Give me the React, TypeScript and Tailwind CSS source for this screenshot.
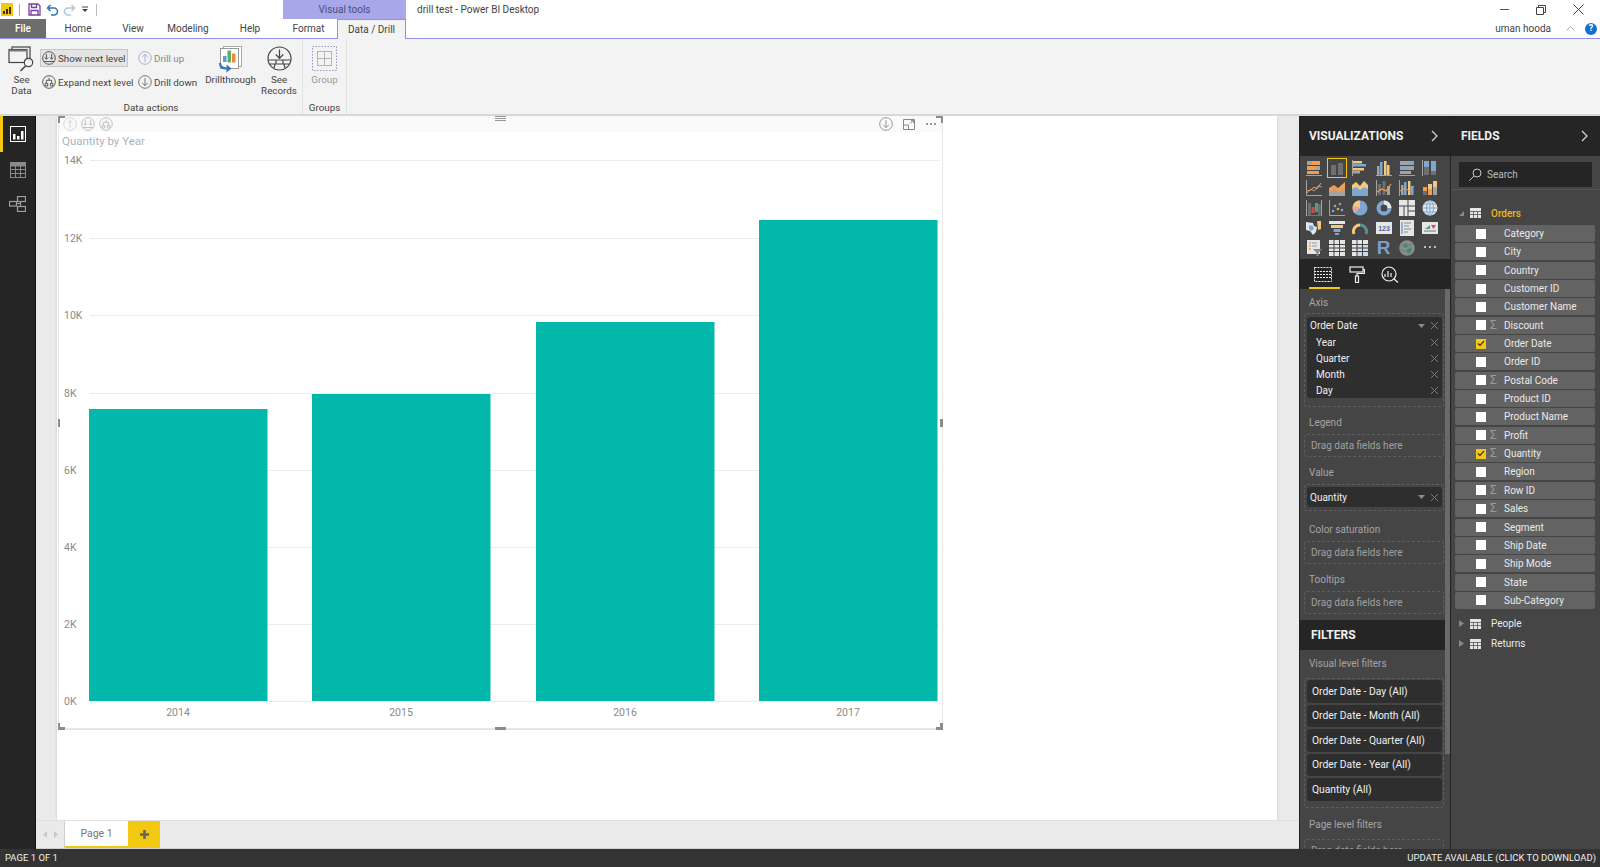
import type { ReactNode } from 'react';

const FONT = "font-['Roboto','Liberation_Sans',sans-serif]";

// Ribbon icon: round outline with something inside
const Round = ({ size = 14, color = '#444', children }: { size?: number; color?: string; children: ReactNode }) => (
  <svg width={size} height={size} viewBox="0 0 16 16" fill="none" stroke={color} strokeWidth="1" className="shrink-0">
    <circle cx="8" cy="8" r="7.2" />
    {children}
  </svg>
);

const ArrowUp = () => <path d="M8 12.5V4M4.8 7L8 3.8 11.2 7" />;
const ArrowDown = () => <path d="M8 3.5V12M4.8 9L8 12.2 11.2 9" />;
const NextLevel = () => <path d="M5 3.5V9M3.2 7.5L5 9.5 6.8 7.5M11 3.5V9M9.2 7.5L11 9.5 12.8 7.5M2 12h12" />;
const Expand = () => <path d="M8 3v3M5 6h6v3M5 6v3M3.5 9.5h3v3h-3zM9.5 9.5h3v3h-3z" />;

const SeeDataIcon = () => (
  <svg width="27" height="26" viewBox="0 0 27 26" fill="none" stroke="#444" strokeWidth="1.2">
    <rect x="4" y="1" width="18" height="12" fill="#f3f3f3" />
    <rect x="1" y="3.5" width="18" height="13" fill="#f3f3f3" />
    <rect x="1" y="3.5" width="18" height="2" fill="#777" stroke="none" />
    <circle cx="20.5" cy="16.5" r="4.2" fill="#f3f3f3" />
    <path d="M17.5 20L12.5 25" strokeWidth="1.6" />
  </svg>
);

const DrillthroughIcon = () => (
  <svg width="25" height="28" viewBox="0 0 25 28">
    <rect x="5.5" y="1.5" width="18" height="20" fill="#fff" stroke="#aaa" />
    <rect x="2.5" y="3.5" width="18" height="20" fill="#fff" stroke="#999" />
    <rect x="5" y="11" width="3.5" height="6" fill="#5a9bd5" />
    <rect x="9.5" y="5.5" width="3.5" height="12" fill="#5bae6a" />
    <rect x="14" y="8.5" width="3.5" height="9" fill="#ed8b3b" />
    <path d="M2 18c0 4 3 5.5 7 5.5" fill="none" stroke="#2e75b6" strokeWidth="2.2" />
    <path d="M8.5 19.5l5 4-5 4z" fill="#2e75b6" />
  </svg>
);

const SeeRecordsIcon = () => (
  <svg width="25" height="25" viewBox="0 0 25 25" fill="none" stroke="#444" strokeWidth="1.2">
    <circle cx="12.5" cy="12.5" r="11.5" />
    <path d="M12.5 3.5V12M8.8 8.5l3.7 3.8 3.7-3.8" />
    <path d="M1.5 14h22M2.5 18h20M9 14v4M16 14v4M8 18l-1 4M17 18l1 4" />
  </svg>
);

const GroupIcon = () => (
  <svg width="25" height="25" viewBox="0 0 25 25" fill="none">
    <rect x="0.5" y="0.5" width="24" height="24" stroke="#9a9ac0" strokeDasharray="1.5 1.5" />
    <rect x="5.5" y="5.5" width="14" height="14" stroke="#b5b5b5" />
    <path d="M12.5 5.5v14M5.5 12.5h14" stroke="#b5b5b5" />
  </svg>
);

const G = '#a3a3a3';
const D = '#6f6f6f';
const O = '#ee9f52';
const Y = '#f4c77f';
const B = '#7ea6d3';
const L = '#e6e6e6';

// 16x16 pictograms for the visualizations gallery
const vizIcons: ReactNode[] = [
  <><path d="M0 15.5h16" stroke={G} /><rect x="1" y="1" width="5" height="4" fill={G} /><rect x="6" y="1" width="8" height="4" fill={O} /><rect x="1" y="6" width="9" height="4" fill={O} /><rect x="10" y="6" width="4" height="4" fill={G} /><rect x="1" y="11" width="12" height="3" fill={O} /></>,
  <><rect x="2" y="5" width="5" height="10" fill={D} /><rect x="9" y="3" width="5" height="12" fill={D} /></>,
  <><path d="M.5 0v16" stroke={G} /><rect x="1" y="1" width="9" height="2.5" fill={Y} /><rect x="1" y="4" width="13" height="2.5" fill={B} /><rect x="1" y="8" width="11" height="2.5" fill={Y} /><rect x="1" y="11" width="7" height="2.5" fill={G} /></>,
  <><path d="M0 15.5h16" stroke={G} /><rect x="1" y="6" width="2.5" height="9" fill={G} /><rect x="4" y="2" width="2.5" height="13" fill={B} /><rect x="8" y="1" width="2.5" height="14" fill={Y} /><rect x="11" y="5" width="2.5" height="10" fill={Y} /></>,
  <><path d="M0 15.5h16" stroke={G} /><rect x="1" y="1" width="9" height="4" fill={G} /><rect x="10" y="1" width="5" height="4" fill={B} /><rect x="1" y="6" width="5" height="4" fill={B} /><rect x="6" y="6" width="9" height="4" fill={G} /><rect x="1" y="11" width="11" height="3" fill={G} /></>,
  <><path d="M.5 0v16" stroke={G} /><rect x="2" y="1" width="5" height="6" fill={B} /><rect x="2" y="7" width="5" height="8" fill={D} /><rect x="9" y="1" width="5" height="10" fill={B} /><rect x="9" y="11" width="5" height="4" fill={D} /></>,
  <><path d="M.5 0v15.5H16" stroke={G} fill="none" /><path d="M1 13l4-4 3 2 4-5 4 1" stroke={B} fill="none" /><path d="M1 11l4-1 3-3 3 2 4-6" stroke={O} fill="none" /></>,
  <><path d="M0 8l5-3 4 3 7-6v14H0z" fill={O} /><path d="M0 12l6-2 4 2 6-3v7H0z" fill={G} /></>,
  <><path d="M0 5l4-3 4 4 4-5 4 4v11H0z" fill={Y} /><path d="M0 9l4-2 4 3 4-3 4 2v7H0z" fill={B} /></>,
  <><path d="M.5 0v16" stroke={G} /><rect x="2" y="4" width="3" height="11" fill={D} /><rect x="6.5" y="1" width="3" height="14" fill={D} /><rect x="11" y="6" width="3" height="9" fill={G} /><path d="M1 12l5-3 4 2 5-7" stroke={O} fill="none" strokeWidth="1.2" /></>,
  <><path d="M.5 0v16" stroke={G} /><rect x="2" y="5" width="2.5" height="10" fill={G} /><rect x="5" y="2" width="2.5" height="13" fill={B} /><rect x="9" y="1" width="2.5" height="14" fill={Y} /><rect x="12" y="6" width="2.5" height="9" fill={B} /><path d="M1 11l5-3 4 3 5-5" stroke={O} fill="none" /></>,
  <><rect x="1" y="7" width="4" height="4" fill={O} /><rect x="1" y="11" width="4" height="4" fill={D} /><rect x="6" y="4" width="4" height="5" fill={Y} /><rect x="6" y="9" width="4" height="6" fill={O} /><rect x="11" y="1" width="4" height="6" fill={Y} /><rect x="11" y="7" width="4" height="8" fill={G} /></>,
  <><path d="M.5 0v16h15V0" stroke={G} fill="none" /><rect x="2" y="3" width="3" height="12" fill={D} /><rect x="5.5" y="7" width="3" height="6" fill="#c94f4f" /><rect x="9" y="3" width="3" height="9" fill="#4aa17f" /><rect x="12.2" y="4" width="2.5" height="11" fill={D} /></>,
  <><path d="M.5 0v15.5H16" stroke={G} fill="none" /><circle cx="4" cy="11" r="1.3" fill={B} /><circle cx="6" cy="6" r="1.3" fill={G} /><circle cx="9" cy="9" r="1.3" fill={O} /><circle cx="11" cy="4" r="1.3" fill={B} /><circle cx="13" cy="10" r="1.3" fill={B} /></>,
  <><circle cx="8" cy="8" r="7.5" fill={B} /><path d="M8 8V.5A7.5 7.5 0 0 0 .7 6.3z" fill={Y} /><path d="M8 8L.7 6.3A7.5 7.5 0 0 0 3 13.6z" fill="#e0a49a" /></>,
  <><circle cx="8" cy="8" r="5.5" fill="none" stroke={B} strokeWidth="4" /><path d="M8 2.5a5.5 5.5 0 0 1 5.5 5.5" fill="none" stroke={L} strokeWidth="4" /></>,
  <><rect x="0" y="0" width="16" height="16" fill={L} /><path d="M0 6h16M9 0v16M5 6v10M9 11h7" stroke="#454545" /></>,
  <><circle cx="8" cy="8" r="7.5" fill={L} /><path d="M8 .5v15M.5 8h15M2 4h12M2 12h12" stroke={B} /><ellipse cx="8" cy="8" rx="3.5" ry="7.5" fill="none" stroke={B} /></>,
  <><path d="M0 2l7 1 1 3 3 1-1 5-3 3-3-4-4-1z" fill={L} /><path d="M3 5l4 1 1 3-3 2-2-2z" fill={B} /><path d="M11 1h4v8l-3 1z" fill={Y} /></>,
  <><rect x="0" y="1" width="16" height="3" fill={L} /><rect x="2" y="5" width="12" height="3" fill={Y} /><rect x="4.5" y="9" width="7" height="3" fill={B} /><rect x="6" y="13" width="4" height="2" fill={B} /></>,
  <><path d="M2 14A6.5 6.5 0 0 1 8 5" fill="none" stroke={Y} strokeWidth="3" /><path d="M8 5a6.5 6.5 0 0 1 6 9" fill="none" stroke="#5e8f8f" strokeWidth="3" /></>,
  <><rect x="0" y="2" width="16" height="12" fill={L} /><text x="8" y="11" fontSize="7" textAnchor="middle" fill="#4a6f9c" fontWeight="700" fontFamily="Liberation Sans, sans-serif">123</text></>,
  <><rect x="1" y="0" width="14" height="16" fill={L} /><path d="M3 2v12" stroke={B} strokeWidth="1.6" /><path d="M5 3h7M5 6h5M5 9h7M5 12h4" stroke="#888" /></>,
  <><rect x="0" y="2" width="16" height="12" fill={L} /><path d="M3 9h5V5z" fill="#4aa17f" /><path d="M9 5h5l-2.5 4z" fill="#c94f4f" /><path d="M2 11h12" stroke="#777" /></>,
  <><rect x="1" y="0" width="13" height="14" fill={L} /><path d="M3 3h2M3 6h2M3 9h2" stroke={O} strokeWidth="1.4" /><path d="M6 3h5M6 6h5" stroke="#999" /><path d="M7 9h9l-3.5 3.5V16h-2v-3.5z" fill="#8a8a8a" /></>,
  <><rect x="0" y="0" width="16" height="16" fill={L} /><path d="M0 4.5h16M0 8h16M0 11.500h16M5 0v16M10.500 0v16" stroke="#454545" /></>,
  <><rect x="0" y="0" width="16" height="16" fill="#cdd8e6" /><rect x="0" y="0" width="16" height="4" fill={L} /><rect x="0" y="0" width="5" height="16" fill={L} /><path d="M0 4.5h16M0 8h16M0 11.500h16M5 0v16M10.500 0v16" stroke="#454545" /></>,
  null, // the R visual is a plain letter, see the gallery
  <><circle cx="8" cy="8" r="7.8" fill="#8c8c8c" /><path d="M3 5l4-2 3 3-4 2zM7 10l5-3 1 4-4 3z" fill="#3f8f6a" /><path d="M2 9l3 1 1 3zM10 3l3 2-2 1z" fill="#3f7fbf" /></>,
  <><circle cx="3" cy="7" r="1" fill={L} /><circle cx="8" cy="7" r="1" fill={L} /><circle cx="13" cy="7" r="1" fill={L} /></>,
];

const fields: [string, boolean, boolean][] = [
  ['Category', false, false],
  ['City', false, false],
  ['Country', false, false],
  ['Customer ID', false, false],
  ['Customer Name', false, false],
  ['Discount', false, true],
  ['Order Date', true, false],
  ['Order ID', false, false],
  ['Postal Code', false, true],
  ['Product ID', false, false],
  ['Product Name', false, false],
  ['Profit', false, true],
  ['Quantity', true, true],
  ['Region', false, false],
  ['Row ID', false, true],
  ['Sales', false, true],
  ['Segment', false, false],
  ['Ship Date', false, false],
  ['Ship Mode', false, false],
  ['State', false, false],
  ['Sub-Category', false, false],
];

const visualFilters = [
  'Order Date - Day (All)',
  'Order Date - Month (All)',
  'Order Date - Quarter (All)',
  'Order Date - Year (All)',
  'Quantity (All)',
];

const TableGlyph = () => (
  <svg width="11" height="10" viewBox="0 0 11 10">
    <rect width="11" height="10" fill="#e4e4e4" />
    <path d="M0 3.500h11M0 6.500h11M3.500 3v7M7.500 3v7" stroke="#555" strokeWidth="0.8" />
  </svg>
);

const Chevron = () => (
  <svg width="8" height="12" viewBox="0 0 8 12" fill="none" stroke="#d8d8d8" strokeWidth="1.2">
    <path d="M1 1l5 5-5 5" />
  </svg>
);

const Cross = () => (
  <svg width="7" height="7" viewBox="0 0 7 7" stroke="#7d7d7d" strokeWidth="1">
    <path d="M0 0l7 7M7 0L0 7" />
  </svg>
);

const Caret = () => (
  <svg width="7" height="4" viewBox="0 0 7 4" fill="#8a8a8a">
    <path d="M0 0h7L3.500 4z" />
  </svg>
);

const WellLabel = ({ children, className = '' }: { children: ReactNode; className?: string }) => (
  <div className={`h-[15px] pl-[9px] text-[10px] leading-[15px] text-[#a5a5a5] ${className}`}>{children}</div>
);

const EmptyWell = () => (
  <div className="ml-[4px] h-[23px] w-[140px] rounded-[3px] border border-dashed border-[#5e5e5e] pl-[6px] text-[10px] leading-[22px] text-[#a0a0a0]">
    Drag data fields here
  </div>
);

const Handle = ({ className }: { className: string }) => <div className={`absolute bg-[#8c8c8c] ${className}`} />;

const Chart = () => {
  const ticks = [
    ['14K', 160],
    ['12K', 238],
    ['10K', 315],
    ['8K', 393],
    ['6K', 470],
    ['4K', 547],
    ['2K', 624],
    ['0K', 701],
  ] as const;
  const bars = [
    ['2014', 89, 409],
    ['2015', 312, 394],
    ['2016', 536, 322],
    ['2017', 759, 220],
  ] as const;
  // page coordinates minus the visual's own origin (58, 116)
  return (
    <svg width="884" height="612" className="absolute left-0 top-0" fontFamily="Roboto, sans-serif" fontSize="10.500">
      {ticks.map(([label, y]) => (
        <g key={label}>
          <line x1="31" x2="880" y1={y - 116 + 0.5} y2={y - 116 + 0.5} stroke="#ebebeb" />
          <text x="5" y={y - 116 + 4} fill="#8a8a8a">{label}</text>
        </g>
      ))}
      {bars.map(([label, x, top]) => (
        <g key={label}>
          <rect x={x - 59} y={top - 116} width="178.500" height={701 - top} fill="#01b8aa" />
          <text x={x - 58 + 88} y="600" textAnchor="middle" fill="#8a8a8a">{label}</text>
        </g>
      ))}
    </svg>
  );
};

export default function App() {
  return (
    <div className={`flex h-[867px] w-[1600px] flex-col overflow-hidden bg-white ${FONT}`}>
      {/* title bar */}
      <div className="flex h-[19px] shrink-0 items-center bg-white">
        <div className="ml-[1px] flex h-[13px] w-[12px] items-end justify-center gap-[1px] bg-[#f2c811] pb-[2px]">
          <span className="h-[3px] w-[2px] bg-[#333]" />
          <span className="h-[5px] w-[2px] bg-[#333]" />
          <span className="h-[7px] w-[2px] bg-[#333]" />
        </div>
        <div className="ml-[6px] h-[12px] w-px bg-[#aaa]" />
        <svg width="13" height="13" viewBox="0 0 13 13" className="ml-[8px]" fill="none" stroke="#7a3f9d" strokeWidth="1.3">
          <path d="M1 1h9l2 2v9H1z" />
          <path d="M3.500 1v3.500h5V1M3 12V7.500h7V12" />
        </svg>
        <svg width="13" height="12" viewBox="0 0 13 12" className="ml-[5px]" fill="none" stroke="#2e75b6" strokeWidth="1.500">
          <path d="M4.500 1L1.500 4l3 3M2 4h6a3.500 3.500 0 0 1 0 7H5" />
        </svg>
        <svg width="13" height="12" viewBox="0 0 13 12" className="ml-[4px]" fill="none" stroke="#b4c6dc" strokeWidth="1.500">
          <path d="M8.500 1l3 3-3 3M11 4H5a3.500 3.500 0 0 0 0 7h3" />
        </svg>
        <svg width="7" height="7" viewBox="0 0 7 7" className="ml-[6px]">
          <path d="M0 1h6" stroke="#444" />
          <path d="M0 3h6L3 6z" fill="#444" />
        </svg>
        <div className="ml-[7px] h-[12px] w-px bg-[#bbb]" />
        <div className="ml-[186px] flex h-[19px] w-[123px] items-center justify-center bg-[#a7a7e9] text-[10px] text-[#4d4d78]">
          Visual tools
        </div>
        <div className="ml-[11px] text-[10px] text-[#444]">drill test - Power BI Desktop</div>
        <div className="ml-auto flex items-center">
          <div className="h-px w-[9px] bg-[#555]" />
          <svg width="10" height="10" viewBox="0 0 10 10" className="ml-[27px]" fill="none" stroke="#444">
            <path d="M.5 2.500h7v7h-7zM2.500 2.500v-2h7v7h-2" />
          </svg>
          <svg width="11" height="11" viewBox="0 0 11 11" className="ml-[27px] mr-[16px]" stroke="#444">
            <path d="M.5.500l10 10M10.500.500l-10 10" />
          </svg>
        </div>
      </div>

      {/* ribbon tabs */}
      <div className="flex h-[20px] shrink-0 border-b border-[#8f8fe8] text-[10px] text-[#444]">
        <div className="flex h-[19px] w-[46px] items-center justify-center bg-[#6d6d6d] font-medium text-white">File</div>
        <div className="flex w-[64px] justify-center pt-[1px] leading-[18px]">Home</div>
        <div className="flex w-[46px] justify-center pt-[1px] leading-[18px]">View</div>
        <div className="flex w-[64px] justify-center pt-[1px] leading-[18px]">Modeling</div>
        <div className="flex w-[60px] justify-center pt-[1px] leading-[18px]">Help</div>
        <div className="flex w-[57px] justify-center pt-[1px] leading-[18px]">Format</div>
        <div className="z-10 flex h-[20px] w-[69px] justify-center border-x border-t border-[#8f8fe8] bg-[#f3f3f3] pt-[1px] leading-[18px]">
          Data / Drill
        </div>
        <div className="ml-auto flex items-center text-[10px] text-[#444]">
          <span>uman hooda</span>
          <svg width="9" height="5" viewBox="0 0 9 5" className="ml-[15px]" fill="none" stroke="#aaa">
            <path d="M.5 4.500l4-4 4 4" />
          </svg>
          <div className="ml-[10px] mr-[3px] flex h-[12px] w-[12px] items-center justify-center rounded-full bg-[#1170cf] text-[9px] font-bold text-white">?</div>
        </div>
      </div>

      {/* ribbon */}
      <div className="flex h-[77px] shrink-0 border-b-2 border-[#d8d8d8] bg-[#f3f3f3] text-[9.8px] leading-[11px] text-[#444]">
        <div className="flex w-[303px] flex-col border-r border-[#e2e2e2]">
          <div className="flex h-[63px] pt-[7px]">
            <div className="flex w-[40px] flex-col items-center pl-[3px]">
              <SeeDataIcon />
              <span className="mt-[2px] text-center">See<br />Data</span>
            </div>
            <div className="flex w-[97px] flex-col">
              <div className="mt-[3px] flex h-[18px] w-[88px] items-center gap-[2px] border border-[#c6c6c6] bg-[#e4e4e4] pl-[1px]">
                <Round><NextLevel /></Round>
                <span className="whitespace-nowrap">Show next level</span>
              </div>
              <div className="mt-[6px] flex h-[18px] items-center gap-[2px] pl-[2px]">
                <Round><Expand /></Round>
                <span className="whitespace-nowrap">Expand next level</span>
              </div>
            </div>
            <div className="flex w-[64px] flex-col">
              <div className="mt-[3px] flex h-[18px] items-center gap-[2px] pl-[1px] text-[#888]">
                <Round color="#99aac4"><ArrowUp /></Round>
                <span>Drill up</span>
              </div>
              <div className="mt-[6px] flex h-[18px] items-center gap-[2px] pl-[1px]">
                <Round color="#666"><ArrowDown /></Round>
                <span className="whitespace-nowrap">Drill down</span>
              </div>
            </div>
            <div className="-mt-[1px] flex w-[59px] flex-col items-center">
              <DrillthroughIcon />
              <span className="mt-[1px]">Drillthrough</span>
            </div>
            <div className="flex w-[38px] flex-col items-center">
              <SeeRecordsIcon />
              <span className="mt-[3px] text-center">See<br />Records</span>
            </div>
          </div>
          <div className="text-center leading-[12px]">Data actions</div>
        </div>
        <div className="flex w-[44px] flex-col items-center border-r border-[#e2e2e2]">
          <div className="flex h-[63px] flex-col items-center pt-[7px]">
            <GroupIcon />
            <span className="mt-[3px] text-[#999]">Group</span>
          </div>
          <div className="leading-[12px]">Groups</div>
        </div>
      </div>

      {/* main */}
      <div className="flex min-h-0 flex-1 overflow-hidden">
        {/* left rail */}
        <div className="flex w-[35px] shrink-0 flex-col bg-[#252525]">
          <div className="flex h-[36px] items-center justify-center border-l-[3px] border-[#f2c811] pr-[3px]">
            <svg width="16" height="16" viewBox="0 0 16 16">
              <rect x="0.500" y="0.500" width="15" height="15" fill="none" stroke="#fff" />
              <rect x="3" y="8" width="2.500" height="5.500" fill="#fff" />
              <rect x="7" y="10" width="2.500" height="3.500" fill="#fff" />
              <rect x="11" y="5" width="2.500" height="8.500" fill="#fff" />
            </svg>
          </div>
          <div className="flex h-[36px] items-center justify-center">
            <svg width="16" height="16" viewBox="0 0 16 16" fill="none" stroke="#8a8a8a">
              <rect x="0.500" y="0.500" width="15" height="15" />
              <rect x="0.500" y="0.500" width="15" height="3.500" fill="#8a8a8a" />
              <path d="M0 7.500h16M0 11.500h16M5.500 4v12M10.500 4v12" />
            </svg>
          </div>
          <div className="flex h-[32px] items-center justify-center">
            <svg width="17" height="16" viewBox="0 0 17 16" fill="none" stroke="#a0a0a0" strokeWidth="1.200">
              <rect x="0.500" y="5.500" width="7" height="4.500" />
              <rect x="8.500" y="0.500" width="8" height="5" />
              <rect x="8.500" y="10.500" width="8" height="5" />
              <path d="M7.500 7.500h4M11.500 5.500v5" />
            </svg>
          </div>
        </div>

        {/* canvas and page tabs */}
        <div className="flex min-w-0 flex-1 flex-col border-l border-[#111]">
          <div className="flex min-h-0 flex-1 bg-[#eaeaea]">
            <div className="ml-[21px] w-[1220px] bg-white shadow-[0_0_3px_rgba(0,0,0,0.15)]">
              <div className="relative ml-[1px] h-[614px] w-[885px] border-x-[1px] border-b-[2px] border-[#e6e6e6]">
                <div className="flex h-[16px] items-center bg-[#fafafa] pl-[4px]">
                  <div className="flex gap-[4px] opacity-60">
                    <Round size={14} color="#b9b9b9"><ArrowUp /></Round>
                    <Round size={14} color="#8f8f8f"><NextLevel /></Round>
                    <Round size={14} color="#8f8f8f"><Expand /></Round>
                  </div>
                  <div className="ml-auto mr-[6px] flex items-center gap-[10px]">
                    <Round size={14} color="#888"><ArrowDown /></Round>
                    <svg width="12" height="11" viewBox="0 0 12 11" fill="none" stroke="#888">
                      <path d="M.5.500h11v10H.5zM.5 6h5v4.500M7 4.500l3-3M8 1.500h2.500V4" />
                    </svg>
                    <span className="ml-[1px] flex gap-[2px]">
                      <i className="h-[2px] w-[2px] rounded-full bg-[#777]" />
                      <i className="h-[2px] w-[2px] rounded-full bg-[#777]" />
                      <i className="h-[2px] w-[2px] rounded-full bg-[#777]" />
                    </span>
                  </div>
                </div>
                <Chart />
                <div className="relative pl-[3px] text-[11.5px] leading-[18px] text-[#aeb3bb]">Quantity by Year</div>
                {/* selection handles */}
                <Handle className="-left-[1px] top-0 h-[2px] w-[7px]" />
                <Handle className="-left-[1px] top-0 h-[7px] w-[2px]" />
                <Handle className="-right-[1px] top-0 h-[2px] w-[7px]" />
                <Handle className="-right-[1px] top-0 h-[7px] w-[2px]" />
                <Handle className="-left-[1px] -bottom-[2px] h-[3px] w-[7px]" />
                <Handle className="-left-[1px] -bottom-[2px] h-[7px] w-[2px]" />
                <Handle className="-right-[1px] -bottom-[2px] h-[3px] w-[7px]" />
                <Handle className="-right-[1px] -bottom-[2px] h-[7px] w-[3px]" />
                <Handle className="-left-[1px] top-[303px] h-[8px] w-[2px]" />
                <Handle className="-right-[1px] top-[303px] h-[8px] w-[3px]" />
                <Handle className="-bottom-[2px] left-[436px] h-[3px] w-[11px]" />
                <div className="absolute left-[436px] top-0 flex w-[11px] flex-col gap-px">
                  <i className="h-px bg-[#999]" />
                  <i className="h-px bg-[#999]" />
                  <i className="h-px bg-[#999]" />
                </div>
              </div>
            </div>
          </div>
          <div className="flex h-[29px] shrink-0 border-t border-[#e0e0e0] border-b border-b-[#cfcfcf] bg-[#eaeaea]">
            <div className="flex w-[29px] items-center justify-center gap-[7px] border-r border-[#cfcfcf]">
              <svg width="4" height="7" viewBox="0 0 4 7" fill="#c6c6c6"><path d="M4 0v7L0 3.500z" /></svg>
              <svg width="4" height="7" viewBox="0 0 4 7" fill="#c6c6c6"><path d="M0 0v7l4-3.500z" /></svg>
            </div>
            <div className="flex w-[63px] items-center justify-center border-b-[2px] border-[#f2c811] bg-white text-[10.5px] text-[#777]">Page 1</div>
            <div className="flex w-[32px] items-center justify-center bg-[#f2c811]">
              <svg width="9" height="9" viewBox="0 0 9 9" fill="#666"><path d="M3.200 0h2.600v3.200H9v2.600H5.800V9H3.200V5.800H0V3.200h3.200z" /></svg>
            </div>
          </div>
        </div>

        {/* visualizations pane */}
        <div className="flex w-[151px] shrink-0 flex-col overflow-hidden border-l border-[#222] bg-[#454545]">
          <div className="flex h-[40px] shrink-0 items-center justify-between bg-[#252525] pl-[9px] pr-[11px]">
            <span className="text-[12px] font-bold text-[#f0f0f0]">VISUALIZATIONS</span>
            <Chevron />
          </div>
          <div className="grid h-[103px] shrink-0 grid-cols-[repeat(6,23.3px)] grid-rows-[repeat(5,20px)] content-start justify-start pl-[2px] pt-[2px]">
            {vizIcons.map((icon, i) => (
              <div key={i} className="flex items-center justify-center">
                {icon === null ? (
                  <span className="font-['Liberation_Sans',sans-serif] text-[19px] font-bold leading-[20px] text-[#7a9fc7]">R</span>
                ) : (
                  <svg width="16" height="16" viewBox="0 0 16 16" className={i === 1 ? 'box-content border border-[#f2c811] p-[1px]' : ''}>
                    {icon}
                  </svg>
                )}
              </div>
            ))}
          </div>
          <div className="flex h-[30px] shrink-0 items-center gap-[16.500px] bg-[#252525] pl-[14px]">
            <div className="relative flex h-full items-center">
              <svg width="18" height="15" viewBox="0 0 18 15" fill="none" stroke="#eee" strokeDasharray="2 1">
                <rect x="0.500" y="0.500" width="17" height="14" />
                <path d="M0 4.500h18M0 7.500h18M0 10.500h18" />
              </svg>
              <div className="absolute -left-[5px] bottom-0 h-[2px] w-[31px] bg-[#f2c811]" />
            </div>
            <svg width="16" height="17" viewBox="0 0 16 17" fill="none" stroke="#eee" strokeWidth="1.200">
              <rect x="1" y="1" width="13" height="5" />
              <path d="M14 3.500h1.500v4H8V10" />
              <rect x="6.500" y="10" width="3" height="6.500" />
            </svg>
            <svg width="18" height="17" viewBox="0 0 18 17" fill="none" stroke="#eee" strokeWidth="1.200">
              <circle cx="8" cy="8" r="7" />
              <path d="M4 11V8M7 11V5M10 11V7M12.500 12.500L17 16.500" />
            </svg>
          </div>

          <div className="flex min-h-0 flex-1">
            <div className="w-[145px] shrink-0">
              <WellLabel className="mt-[6px]">Axis</WellLabel>
              <div className="ml-[4px] mt-[3px] h-[94px] w-[140px] rounded-[3px] border border-dashed border-[#5e5e5e] pl-[2px] pt-[3px]">
                <div className="h-[81px] w-[135px] rounded-[3px] bg-[#2e2e2e] pl-[3px] text-[10px] text-[#f0f0f0]">
                  <div className="flex h-[17px] items-center pr-[4px]">
                    <span>Order Date</span>
                    <span className="ml-auto mr-[6px]"><Caret /></span>
                    <Cross />
                  </div>
                  {['Year', 'Quarter', 'Month', 'Day'].map((level) => (
                    <div key={level} className="flex h-[16px] items-center pl-[6px] pr-[4px]">
                      <span>{level}</span>
                      <span className="ml-auto"><Cross /></span>
                    </div>
                  ))}
                </div>
              </div>
              <WellLabel className="mt-[8px]">Legend</WellLabel>
              <div className="mt-[4px]"><EmptyWell /></div>
              <WellLabel className="mt-[8px]">Value</WellLabel>
              <div className="ml-[4px] mt-[4px] h-[27px] w-[140px] rounded-[3px] border border-dashed border-[#5e5e5e] pl-[2px] pt-[2px]">
                <div className="flex h-[20px] w-[135px] items-center rounded-[3px] bg-[#2e2e2e] pl-[3px] pr-[4px] text-[10px] text-[#f0f0f0]">
                  <span>Quantity</span>
                  <span className="ml-auto mr-[6px]"><Caret /></span>
                  <Cross />
                </div>
              </div>
              <WellLabel className="mt-[11px]">Color saturation</WellLabel>
              <div className="mt-[4px]"><EmptyWell /></div>
              <WellLabel className="mt-[8px]">Tooltips</WellLabel>
              <div className="mt-[4px]"><EmptyWell /></div>

              {/* filters share the scroll area with the field wells */}
              <div className="mt-[6px] flex h-[30px] items-center bg-[#252525] pl-[11px] text-[12px] font-bold text-[#f0f0f0]">FILTERS</div>
              <WellLabel className="mt-[6px]">Visual level filters</WellLabel>
              <div className="ml-[4px] mt-[7px] flex h-[130px] w-[140px] flex-col gap-[2px] rounded-[3px] border border-dashed border-[#5e5e5e] pl-[2px] pt-[1px]">
                {visualFilters.map((filter) => (
                  <div key={filter} className="flex h-[22.500px] w-[135px] shrink-0 items-center rounded-[3px] bg-[#2e2e2e] pl-[5px] text-[10.3px] text-[#f0f0f0]">
                    {filter}
                  </div>
                ))}
              </div>
              <WellLabel className="mt-[9px]">Page level filters</WellLabel>
              <div className="mt-[7px]"><EmptyWell /></div>
            </div>
            <div className="h-[465px] w-[5px] shrink-0 bg-[#6a6a6a]" />
          </div>
        </div>

        {/* fields pane */}
        <div className="flex w-[150px] shrink-0 flex-col border-l border-[#222] bg-[#454545] text-[10px] text-[#eaeaea]">
          <div className="flex h-[40px] shrink-0 items-center justify-between bg-[#252525] pl-[10px] pr-[11px]">
            <span className="text-[12px] font-bold text-[#f0f0f0]">FIELDS</span>
            <Chevron />
          </div>
          <div className="flex h-[34px] shrink-0 items-start border-b border-[#555] pl-[8px] pt-[6px]">
            <div className="flex h-[25px] w-[133px] items-center gap-[5px] bg-[#252525] pl-[10px] text-[#bdbdbd]">
              <svg width="13" height="13" viewBox="0 0 13 13" fill="none" stroke="#c5c5c5">
                <circle cx="8" cy="5" r="4" />
                <path d="M5 8l-4.500 4.500" />
              </svg>
              <span>Search</span>
            </div>
          </div>
          <div className="mt-[12px] flex h-[20px] items-center pl-[8px] pt-[2px]">
            <svg width="5" height="5" viewBox="0 0 5 5" fill="#888"><path d="M5 0v5H0z" /></svg>
            <span className="ml-[6px]"><TableGlyph /></span>
            <span className="ml-[10px] font-medium text-[#e8b923]">Orders</span>
          </div>
          <div className="flex flex-col gap-[1.350px] pl-[4px] pr-[5px] pt-[3px]">
            {fields.map(([name, checked, sigma]) => (
              <div key={name} className="flex h-[17px] items-center rounded-[2px] bg-[#636363] pl-[21px]">
                <div className={`flex h-[10px] w-[10px] shrink-0 items-center justify-center ${checked ? 'bg-[#f2c811]' : 'bg-white'}`}>
                  {checked && (
                    <svg width="8" height="7" viewBox="0 0 8 7" fill="none" stroke="#333" strokeWidth="1.200">
                      <path d="M1 3.500l2 2L7 1" />
                    </svg>
                  )}
                </div>
                <span className="w-[18px] pl-[4px] text-[12px] leading-[17px] text-[#9a9a9a]">{sigma ? 'Σ' : ''}</span>
                <span className="whitespace-nowrap">{name}</span>
              </div>
            ))}
          </div>
          {['People', 'Returns'].map((table, i) => (
            <div key={table} className={`flex h-[20px] items-center pl-[8px] ${i === 0 ? 'mt-[5px]' : ''}`}>
              <svg width="5" height="7" viewBox="0 0 5 7" fill="#888"><path d="M0 0l5 3.500L0 7z" /></svg>
              <span className="ml-[6px]"><TableGlyph /></span>
              <span className="ml-[10px]">{table}</span>
            </div>
          ))}
        </div>
      </div>

      {/* status bar */}
      <div className="flex h-[18px] shrink-0 items-center justify-between bg-[#333] pl-[5px] pr-[4px] text-[9.5px] text-[#f0f0f0]">
        <span>PAGE 1 OF 1</span>
        <span>UPDATE AVAILABLE (CLICK TO DOWNLOAD)</span>
      </div>
    </div>
  );
}
